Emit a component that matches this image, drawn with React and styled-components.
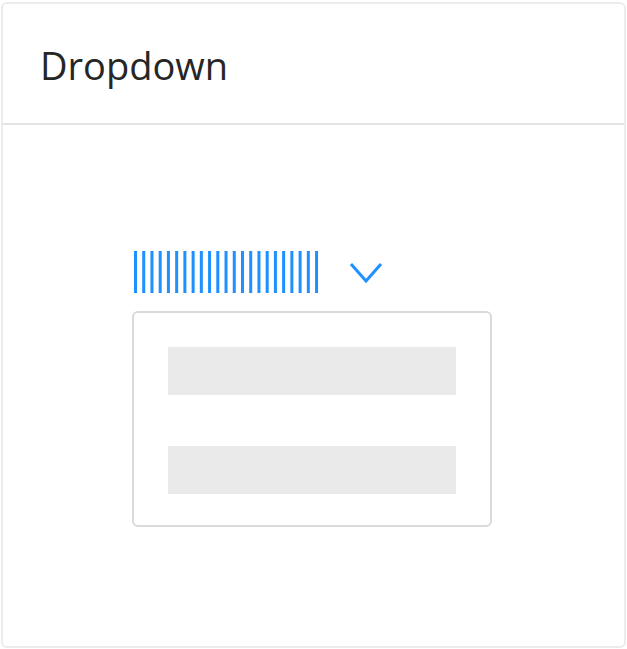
import React from "react";
import styled, { createGlobalStyle } from "styled-components";

const Global = createGlobalStyle`
  html, body { margin: 0; padding: 0; background: #ffffff; }
  body { font-family: "Open Sans", "Noto Sans", Arial, sans-serif; }
`;

const Page = styled.div`
  padding: 2px 1px 1px 1px;
`;

const Card = styled.section`
  box-sizing: border-box;
  width: 625px;
  height: 646px;
  border: 2px solid #ececec;
  border-radius: 6px;
  display: flex;
  flex-direction: column;
  background: #fff;
`;

const Header = styled.header`
  box-sizing: border-box;
  height: 121px;
  padding: 0 0 0 37px;
  display: flex;
  align-items: center;
  border-bottom: 2px solid #e3e3e3;
`;

const Title = styled.h1`
  margin: 0;
  font-family: "Open Sans", "Noto Sans", sans-serif;
  font-weight: 400;
  font-size: 38px;
  color: #262626;
  line-height: 1;
  padding-top: 2px;
`;

const Body = styled.div`
  flex: 1;
  padding: 126px 0 0 129px;
  display: flex;
  flex-direction: column;
  gap: 18px;
`;

const Trigger = styled.div`
  display: flex;
  align-items: center;
  height: 42px;
  padding-left: 2px;
`;

const Box = styled.div`
  box-sizing: border-box;
  width: 360px;
  height: 216px;
  border: 2px solid #d9d9d9;
  border-radius: 6px;
  padding: 34px 33px 0 34px;
  display: flex;
  flex-direction: column;
  gap: 51px;
`;

const Item = styled.div`
  width: 288px;
  height: 48px;
  background: #eaeaea;
`;

const Bars = () => {
  const n = 23;
  const step = 8.23;
  return (
    <svg width="186" height="42" viewBox="0 0 186 42" aria-hidden="true">
      {Array.from({ length: n }).map((_, i) => (
        <rect key={i} x={i * step} y="0" width="3" height="42" fill="#1e90ff" />
      ))}
    </svg>
  );
};

const Chevron = styled.svg`
  margin-left: 29px;
  margin-top: 1px;
`;

export default function App() {
  return (
    <>
      <Global />
      <Page>
        <Card>
          <Header>
            <Title>Dropdown</Title>
          </Header>
          <Body>
            <Trigger>
              <Bars />
              <Chevron width="34" height="24" viewBox="0 0 34 24">
                <polyline
                  points="2,3 17,20 32,3"
                  fill="none"
                  stroke="#1e90ff"
                  strokeWidth="3"
                />
              </Chevron>
            </Trigger>
            <Box>
              <Item />
              <Item />
            </Box>
          </Body>
        </Card>
      </Page>
    </>
  );
}
